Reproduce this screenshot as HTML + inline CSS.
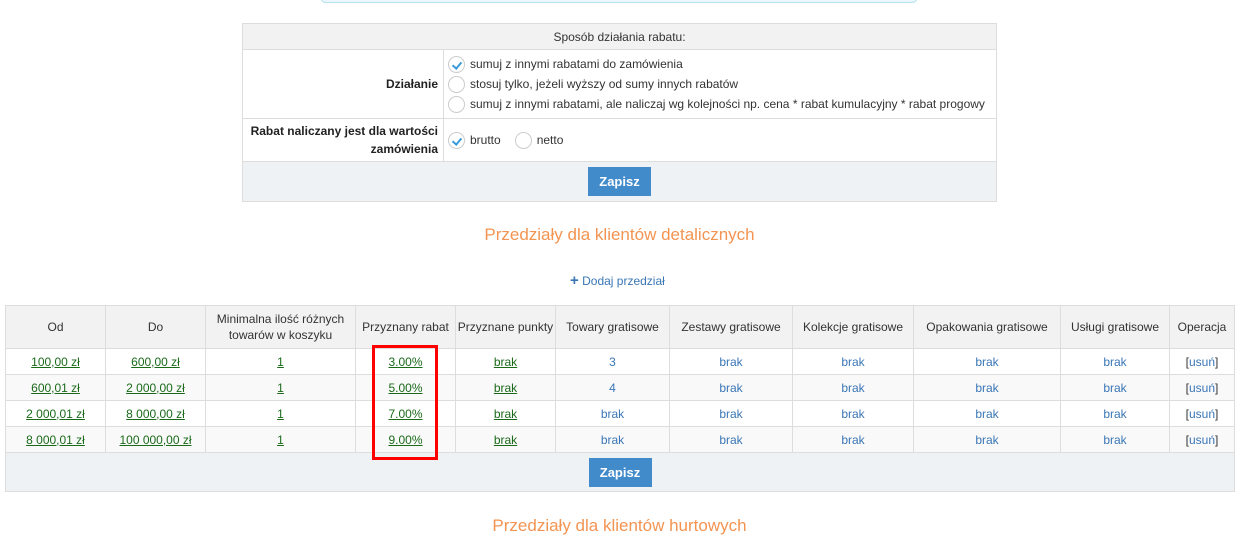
<!DOCTYPE html>
<html><head><meta charset="utf-8">
<style>
*{box-sizing:border-box;margin:0;padding:0}
body{width:1239px;height:544px;background:#fff;font-family:"Liberation Sans",sans-serif;font-size:12px;color:#333;position:relative;overflow:hidden}
.abs{position:absolute}
.topbox{left:320px;top:-10px;width:598px;height:13px;border:1px solid #b8e3ef;border-radius:6px;background:#e9f7fc}
table{border-collapse:collapse;position:absolute;table-layout:fixed}
td,th{border:1px solid #ddd;font-weight:normal}
.t1{left:242px;top:23px;width:755px}
.t1 .hd{background:#f2f2f2;height:26px;text-align:center}
.lab{text-align:right;padding-right:5px;font-weight:bold;color:#222}
.opt{display:flex;align-items:center;height:20px;padding-left:4px}
.rad{width:17px;height:17px;border:1px solid #ccc;border-radius:50%;margin-right:5px;position:relative;background:#fff;flex:none}
.rad.on::after{content:"";position:absolute;left:5px;top:3px;width:4px;height:7px;border:solid #3a9ad9;border-width:0 2px 2px 0;transform:rotate(40deg)}
.foot{background:#eff2f5;text-align:center}
.btn{display:inline-block;background:#428bca;color:#fff;font-weight:bold;font-size:13px;width:63px;height:29px;line-height:29px;text-align:center}
.h2{width:1239px;left:0;text-align:center;color:#f39452;font-size:17px}
.add{left:570px;top:274px;color:#3a76b6;font-size:12px}
.t2{left:5px;top:305px;width:1229px;text-align:center}
.t2 th{background:#f2f2f2;height:43px;color:#333;line-height:16px}
.t2 td{height:26px}
.t2 tr:nth-child(odd) td{background:#f9f9f9}
.g{color:#1a6a1a;text-decoration:underline}
.b{color:#3a76b6}
.red{left:372px;top:345px;width:66px;height:115px;border:3px solid #f00}
</style></head><body>
<div class="abs topbox"></div>
<table class="t1">
<colgroup><col style="width:201px"><col></colgroup>
<tr><td colspan="2" class="hd">Sposób działania rabatu:</td></tr>
<tr style="height:69px"><td class="lab">Działanie</td><td>
<div class="opt"><span class="rad on"></span>sumuj z innymi rabatami do zamówienia</div>
<div class="opt"><span class="rad"></span>stosuj tylko, jeżeli wyższy od sumy innych rabatów</div>
<div class="opt"><span class="rad"></span>sumuj z innymi rabatami, ale naliczaj wg kolejności np. cena * rabat kumulacyjny * rabat progowy</div>
</td></tr>
<tr style="height:43px"><td class="lab" style="line-height:18px">Rabat naliczany jest dla wartości zamówienia</td><td>
<div class="opt"><span class="rad on"></span>brutto<span class="rad" style="margin-left:14px"></span>netto</div></td></tr>
<tr style="height:40px"><td colspan="2" class="foot"><span class="btn">Zapisz</span></td></tr>
</table>
<div class="abs h2" style="top:225px">Przedziały dla klientów detalicznych</div>
<div class="abs add"><b style="font-size:15px;line-height:12px">+</b> Dodaj przedział</div>
<table class="t2">
<colgroup><col style="width:100px"><col style="width:100px"><col style="width:150px"><col style="width:100px"><col style="width:100px"><col style="width:114px"><col style="width:123px"><col style="width:121px"><col style="width:147px"><col style="width:109px"><col style="width:65px"></colgroup>
<tr><th>Od</th><th>Do</th><th>Minimalna ilość różnych towarów w koszyku</th><th>Przyznany rabat</th><th>Przyznane punkty</th><th>Towary gratisowe</th><th>Zestawy gratisowe</th><th>Kolekcje gratisowe</th><th>Opakowania gratisowe</th><th>Usługi gratisowe</th><th>Operacja</th></tr>
<tr><td class="g">100,00 zł</td><td class="g">600,00 zł</td><td class="g">1</td><td class="g">3.00%</td><td class="g">brak</td><td class="b">3</td><td class="b">brak</td><td class="b">brak</td><td class="b">brak</td><td class="b">brak</td><td>[<span class="b">usuń</span>]</td></tr>
<tr><td class="g">600,01 zł</td><td class="g">2 000,00 zł</td><td class="g">1</td><td class="g">5.00%</td><td class="g">brak</td><td class="b">4</td><td class="b">brak</td><td class="b">brak</td><td class="b">brak</td><td class="b">brak</td><td>[<span class="b">usuń</span>]</td></tr>
<tr><td class="g">2 000,01 zł</td><td class="g">8 000,00 zł</td><td class="g">1</td><td class="g">7.00%</td><td class="g">brak</td><td class="b">brak</td><td class="b">brak</td><td class="b">brak</td><td class="b">brak</td><td class="b">brak</td><td>[<span class="b">usuń</span>]</td></tr>
<tr><td class="g">8 000,01 zł</td><td class="g">100 000,00 zł</td><td class="g">1</td><td class="g">9.00%</td><td class="g">brak</td><td class="b">brak</td><td class="b">brak</td><td class="b">brak</td><td class="b">brak</td><td class="b">brak</td><td>[<span class="b">usuń</span>]</td></tr>
<tr><td colspan="11" class="foot" style="height:39px"><span class="btn">Zapisz</span></td></tr>
</table>
<div class="abs red"></div>
<div class="abs h2" style="top:516px">Przedziały dla klientów hurtowych</div>
</body></html>
